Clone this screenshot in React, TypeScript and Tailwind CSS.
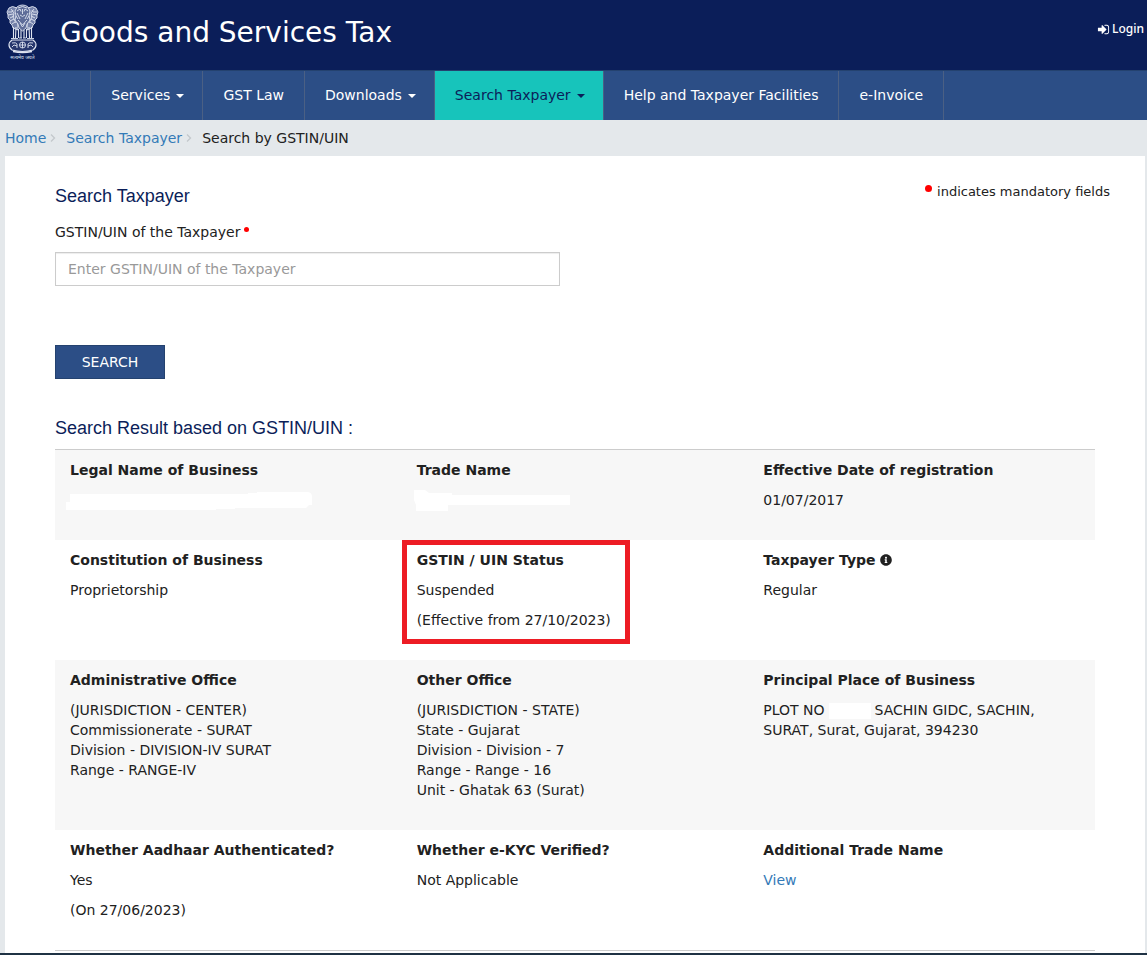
import { ReactNode } from "react";
import { clsx } from "clsx";
import { FaInfoCircle } from "react-icons/fa";

/* ================================
   DATA
================================ */

interface NavItem {
  label: string;
  menu?: boolean;
  active?: boolean;
}

const NAV_ITEMS: NavItem[] = [
  { label: "Home" },
  { label: "Services", menu: true },
  { label: "GST Law" },
  { label: "Downloads", menu: true },
  { label: "Search Taxpayer", menu: true, active: true },
  { label: "Help and Taxpayer Facilities" },
  { label: "e-Invoice" },
];

interface ResultCell {
  title: ReactNode;
  lines: ReactNode[];
  highlight?: boolean;
}

const RESULT_ROWS: ResultCell[][] = [
  [
    { title: "Legal Name of Business", lines: [<HiddenLegalName />] },
    { title: "Trade Name", lines: [<HiddenTradeName />] },
    { title: "Effective Date of registration", lines: ["01/07/2017"] },
  ],
  [
    { title: "Constitution of Business", lines: ["Proprietorship"] },
    {
      title: "GSTIN / UIN Status",
      lines: ["Suspended", "(Effective from 27/10/2023)"],
      highlight: true,
    },
    {
      title: (
        <>
          Taxpayer Type <FaInfoCircle className="inline size-3 align-[-1px]" />
        </>
      ),
      lines: ["Regular"],
    },
  ],
  [
    {
      title: "Administrative Office",
      lines: [
        <>
          (JURISDICTION - CENTER)
          <br />
          Commissionerate - SURAT
          <br />
          Division - DIVISION-IV SURAT
          <br />
          Range - RANGE-IV
        </>,
      ],
    },
    {
      title: "Other Office",
      lines: [
        <>
          (JURISDICTION - STATE)
          <br />
          State - Gujarat
          <br />
          Division - Division - 7
          <br />
          Range - Range - 16
          <br />
          Unit - Ghatak 63 (Surat)
        </>,
      ],
    },
    {
      title: "Principal Place of Business",
      lines: [
        <>
          PLOT NO
          <span className="mr-1 ml-1 inline-block h-4 w-[42px] bg-white align-middle" />
          SACHIN GIDC, SACHIN,
          <br />
          SURAT, Surat, Gujarat, 394230
        </>,
      ],
    },
  ],
  [
    { title: "Whether Aadhaar Authenticated?", lines: ["Yes", "(On 27/06/2023)"] },
    { title: "Whether e-KYC Verified?", lines: ["Not Applicable"] },
    {
      title: "Additional Trade Name",
      lines: [
        <a href="#" className="text-[#337ab7]">
          View
        </a>,
      ],
    },
  ],
];

/* ================================
   PAGE
================================ */

export default function App() {
  return (
    <div className="min-h-screen bg-[#e4e8eb] font-['DejaVu_Sans',sans-serif] text-sm text-[#212121]">
      <header className="flex h-[70px] items-start justify-between bg-[#0b1e59] pr-[3px] pl-1.5 text-white">
        <a href="#" className="flex items-start">
          <Emblem className="mt-1 h-14 w-[34px]" />
          <h1 className="ml-5 text-[28px] leading-[66px]">Goods and Services Tax</h1>
        </a>
        <a
          href="#"
          className="mt-[19px] flex items-center gap-0.5 font-['Noto_Sans',sans-serif] text-xs leading-5 font-medium"
        >
          <SignInIcon className="size-[13px]" />
          Login
        </a>
      </header>

      <nav className="border-t border-[#24426f] bg-[#2c4e86]">
        <ul className="flex">
          {NAV_ITEMS.map((item) => (
            <li key={item.label} className="border-r border-[#4b6084]">
              <a
                href="#"
                className={clsx(
                  "flex h-[49px] items-center gap-1.5 pb-0.5 whitespace-nowrap",
                  item.label === "Home" && "pr-9 pl-[13px]",
                  item.label !== "Home" && (item.menu ? "pr-[18px] pl-5" : "px-5"),
                  item.active ? "bg-[#17c4bb] text-[#0b1e59]" : "text-white",
                )}
              >
                {item.label}
                {item.menu && <Caret />}
              </a>
            </li>
          ))}
        </ul>
      </nav>

      <ol className="flex h-9 items-center px-[5px]">
        <li>
          <a href="#" className="text-[#337ab7]">
            Home
          </a>
        </li>
        <Chevron />
        <li>
          <a href="#" className="text-[#337ab7]">
            Search Taxpayer
          </a>
        </li>
        <Chevron />
        <li>Search by GSTIN/UIN</li>
      </ol>

      <main className="mr-0.5 ml-[5px] bg-white px-[50px] pt-[26px] pb-0.5">
        <form onSubmit={(e) => e.preventDefault()}>
          <div className="flex justify-between">
            <div className="pt-[3px]">
              <Heading>Search Taxpayer</Heading>
            </div>
            <p className="-mr-[15px] flex text-[13px] leading-5">
              <span className="mt-[3px] mr-[5px] size-[7px] rounded-full bg-[#f00]" />
              indicates mandatory fields
            </p>
          </div>

          <div className="mt-3 grid grid-cols-2 gap-[30px]">
            <div>
              <label htmlFor="gstin" className="flex h-[33px] pt-[3px] leading-5">
                GSTIN/UIN of the Taxpayer
                <span className="mt-[5px] ml-[3px] size-[5px] rounded-full bg-[#f00]" />
              </label>
              <input
                id="gstin"
                type="text"
                placeholder="Enter GSTIN/UIN of the Taxpayer"
                className="block h-[34px] w-full border border-[#ccc] px-3 shadow-[inset_0_1px_1px_rgba(0,0,0,0.075)] outline-none placeholder:text-[#999]"
              />
            </div>
          </div>

          <button
            type="submit"
            className="mt-[59px] h-[34px] w-[110px] border border-[#24426f] bg-[#2c4e86] text-white"
          >
            SEARCH
          </button>
        </form>

        <div className="mt-[38px]">
          <Heading>Search Result based on GSTIN/UIN :</Heading>
        </div>

        <section className="mt-2.5 border-y border-[#ccc]">
          {RESULT_ROWS.map((row, i) => (
            <div key={i} className="grid grid-cols-3 pb-2.5 odd:bg-[#f7f7f7]">
              {row.map((cell, j) => (
                <Cell key={j} {...cell} />
              ))}
            </div>
          ))}
        </section>
      </main>

      <footer className="h-0.5 bg-[#1f3244]" />
    </div>
  );
}

/* ================================
   PARTS
================================ */

function Heading({ children }: { children: ReactNode }) {
  return (
    <h2 className="font-['Liberation_Sans',Arial,sans-serif] text-lg leading-[22px] text-[#0b1e59]">
      {children}
    </h2>
  );
}

function Cell({ title, lines, highlight }: ResultCell) {
  return (
    <div className="relative px-[15px] pt-2.5 pb-5 leading-5">
      {highlight && (
        <div className="pointer-events-none absolute top-0 left-0 h-[104px] w-[228px] border-[5px] border-[#ed1c24]" />
      )}
      <p className="font-bold">{title}</p>
      {lines.map((line, i) => (
        <div key={i} className="mt-2.5">
          {line}
        </div>
      ))}
    </div>
  );
}

function Caret() {
  return (
    <svg viewBox="0 0 8 4" className="mt-0.5 h-1 w-2" fill="currentColor">
      <path d="M0 0h8L4 4z" />
    </svg>
  );
}

function Chevron() {
  return (
    <li aria-hidden className="ml-1 w-4">
      <svg viewBox="0 0 6 8" className="h-2 w-1.5" fill="none" stroke="#c3c8cc" strokeWidth="1.3">
        <path d="M1 .5 4.5 4 1 7.5" />
      </svg>
    </li>
  );
}

function SignInIcon({ className }: { className?: string }) {
  return (
    <svg viewBox="0 0 1792 1792" className={className} fill="currentColor">
      <path d="M1312 896q0 26-19 45l-544 544q-19 19-45 19t-45-19-19-45v-288H192q-26 0-45-19t-19-45V704q0-26 19-45t45-19h448V352q0-26 19-45t45-19 45 19l544 544q19 19 19 45zm352-352v704q0 119-84.500 203.500T1376 1536h-320q-13 0-22.500-9.500t-9.500-22.500q0-4-1-20t-.5-26.500 3-23.500 10-19.500 20.500-6.500h320q66 0 113-47t47-113V544q0-66-47-113t-113-47h-312l-11.500-1-11.500-3-8-5.500-7-9-2-13.500q0-4-1-20t-.5-26.500 3-23.500 10-19.500 20.500-6.500h320q119 0 203.500 84.500T1664 544z" />
    </svg>
  );
}

function HiddenLegalName() {
  return (
    <svg viewBox="0 0 246 20" className="-ml-1 block h-5 w-[246px]" fill="#fff">
      <path d="M4 4h178v-1h9v-1h50q5 0 5 5v8h-3l-3 3h-71v1h-19v1H0V12h4z" />
    </svg>
  );
}

function HiddenTradeName() {
  return (
    <svg viewBox="0 0 156 20" className="-ml-[3px] block h-5 w-[156px] overflow-visible" fill="#fff">
      <path d="M0 0h11l4 3h23v2h118v10H34v6H2v-6L0 10z" />
    </svg>
  );
}

/* Lion capital on its round base, motto below */
function Emblem({ className }: { className?: string }) {
  return (
    <svg viewBox="6 4 34 56" className={className} fill="none" stroke="#dfe4f0" strokeWidth="0.9">
      {/* side lions */}
      <path
        d="M17 8q-5-3-8 0l-2 4 1 3 0 3 2 2 0 3 2 2 1 3 5 2zM28 8q5-3 8 0l2 4-1 3 0 3-2 2 0 3-2 2-1 3-5 2z"
        fill="#7582aa"
      />
      <path d="M8 12h4l1-2M37 12h-4l-1-2M8 15l5-1M37 15l-5-1M10 18l4-2M35 18l-4-2M10 21l4-2M35 21l-4-2M12 24l3-2M33 24l-3-2M11 9l3 4-1 4 3 6M34 9l-3 4 1 4-3 6" />
      {/* front lion */}
      <path
        d="M17 7q2-2 5.500-2t5.500 2l2 4-1 5 1 4-3 4-1 4-3.500 3-3.500-3-1-4-3-4 1-4-1-5z"
        fill="#5e6c98"
      />
      <path d="M18 8q4.500-3 9 0M17 11l3-2 1 2.500M28 11l-3-2-1 2.500M22.500 9v5M20 15q2.500 3 5 0M17 13l3 6M28 13l-3 6M18 20l4.500 5 4.500-5M16 16l2 3M29 16l-2 3M20 23l2.500 4 2.500-4" />
      {/* legs */}
      <path d="M13.500 27v11M16 27l-.5 11M18.500 29v9M21 30v8M24 30v8M26.500 29v9M29 27l.5 11M31.500 27v11" strokeWidth="1.1" />
      <path d="M11 38.500h7M19 38h3M23 38h3M27 38.500h7" />
      {/* abacus with wheel */}
      <path d="M12 40h21q3 2 3 5t-3 5q-10.500 3-21 0-3-2-3-5t3-5z" fill="#27376d" strokeWidth="1.2" />
      <circle cx="22.500" cy="45" r="3" />
      <path d="M22.500 42v6M19.500 45h6M12 43q4-1 5 1v4M12 47l2-2 3 1M33 43q-4-1-5 1v4M33 47l-2-2-3 1" />
      <path d="M13 51.500q9.500 2 19 0" strokeWidth="1.400" />
      <text
        x="22.500"
        y="58.500"
        textAnchor="middle"
        fill="#dfe4f0"
        stroke="none"
        fontSize="5"
        fontFamily="Noto Sans, sans-serif"
      >
        सत्यमेव जयते
      </text>
    </svg>
  );
}
